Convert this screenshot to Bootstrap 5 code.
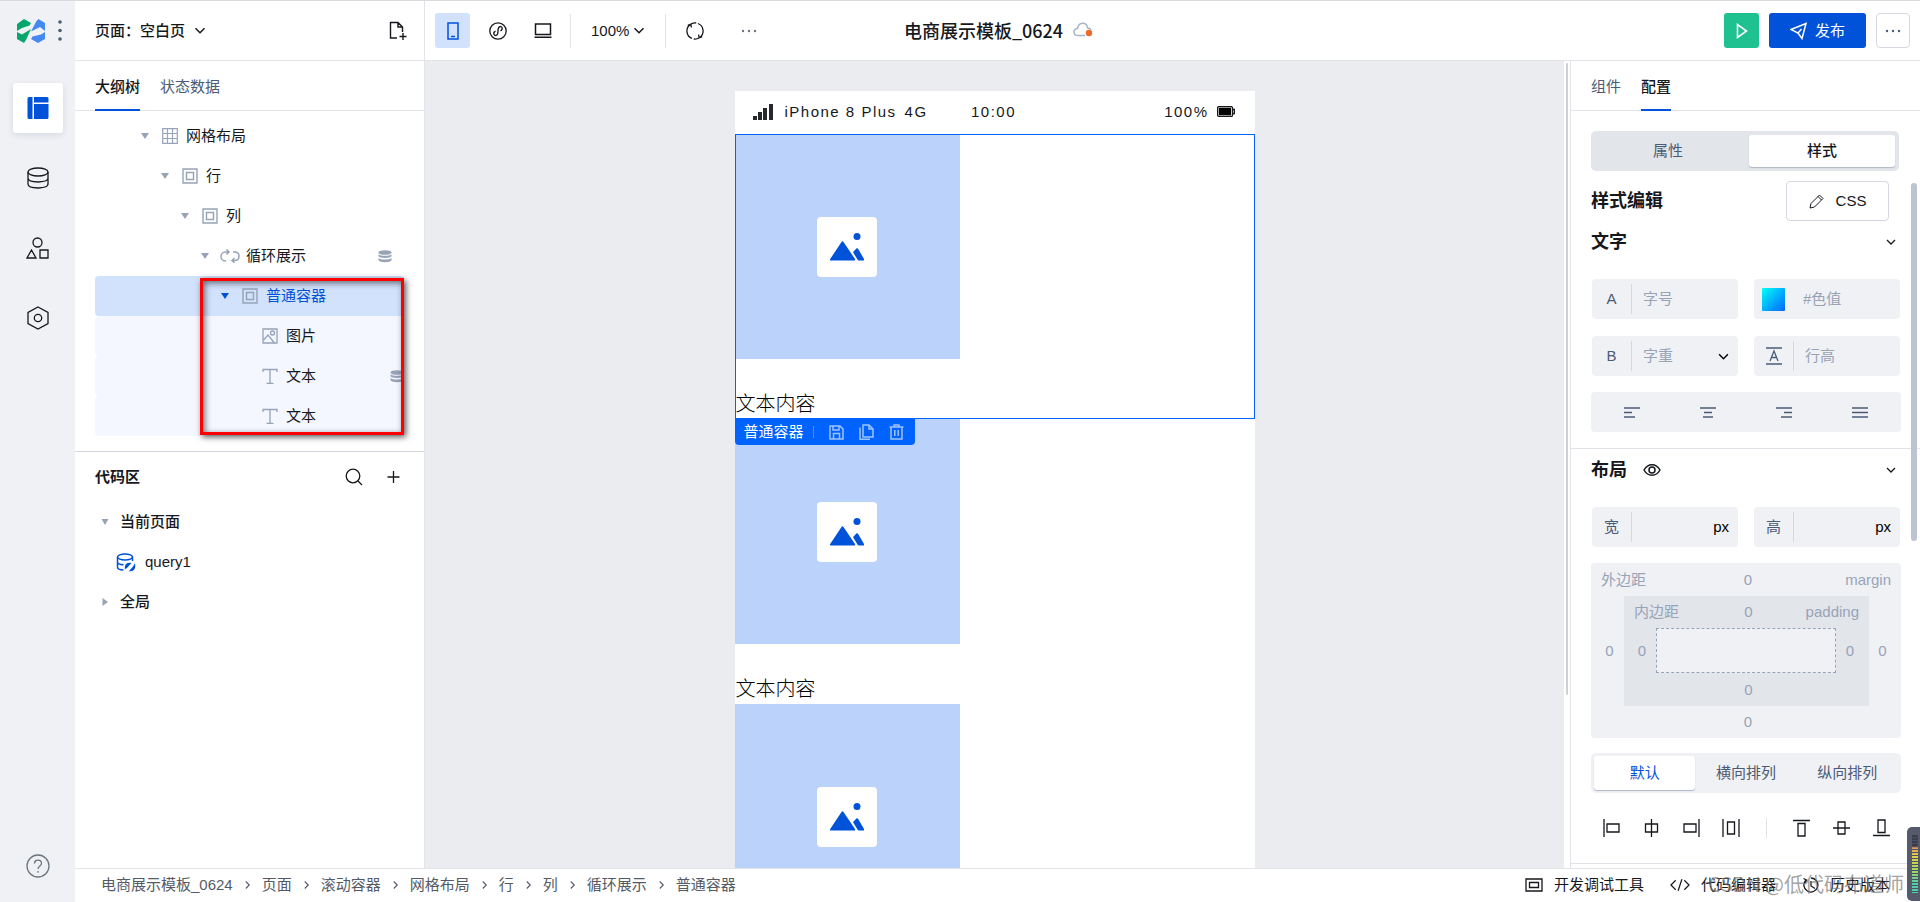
<!DOCTYPE html>
<html lang="zh-CN">
<head>
<meta charset="utf-8">
<meta name="viewport" content="width=device-width, initial-scale=1">
<title>电商展示模板_0624</title>
<link href="https://cdn.jsdelivr.net/npm/bootstrap@5.3.0/dist/css/bootstrap.min.css" rel="stylesheet">
<style>
  :root { --line:#e2e4ea; --ink:#16181d; --slate:#4b5b76; --muted:#97a3b7; --blue:#0052d9; --field:#f0f1f5; --rail:#f0f1f5; }
  body { font-family:"Liberation Sans","Noto Sans CJK SC",sans-serif; font-size:15px; line-height:20px; color:var(--ink); background:#fff; }
  a { color:inherit; text-decoration:none; }
  button { font:inherit; color:inherit; background:none; border:0; padding:0; }
  svg { display:block; flex:none; fill:none; stroke:currentColor; stroke-width:1.3; }
  input { font:inherit; min-width:0; border:0; background:none; padding:0; outline:0; }
  input::placeholder { color:var(--muted); opacity:1; }
  h1,h2 { margin:0; }
  .app { height:100vh; border-top:1px solid #d9dadd; }
  .rail { width:75px; background:var(--rail); flex:none; }
  .rail-head { height:60px; padding:0 13px 0 17px; }
  .rail-btn { width:50px; height:50px; border-radius:3px; }
  .rail-btn.on { background:#fff; color:var(--blue); box-shadow:0 2px 6px rgba(30,50,90,.12); }
  .rail-nav { gap:20px; padding-top:22px; }
  .topbar { height:60px; border-bottom:1px solid var(--line); flex:none; }
  .side { flex:1 0 0; min-width:0; }
  .page-pick { width:350px; border-right:1px solid var(--line); padding:0 17px 0 20px; }
  .semi { font-weight:500; }
  .tools { padding-left:10px; gap:10px; }
  .tools .zoom-pick { margin:0 10px; }
  .tools .sync { margin:0 27px 0 10px; }
  .sq { width:35px; height:35px; border-radius:3px; }
  .sq.on { background:#d2e2fc; color:var(--blue); }
  .vline { width:1px; height:34px; background:var(--line); }
  .proj-wrap { padding:0 0 2px 12px; gap:10px; }
  .proj { font-size:18px; line-height:24px; font-weight:500; font-family:"Noto Sans CJK SC",sans-serif; }
  .acts { gap:10px; padding-right:10px; }
  .run { background:#20c191; color:#fff; }
  .publish { height:35px; width:97px; border-radius:3px; background:var(--blue); color:#fff; }
  .more { width:34px; height:35px; border:1px solid #d5d8e2; border-radius:4px; color:var(--slate); }
  .outline { width:350px; border-right:1px solid var(--line); flex:none; }
  .tabs { height:50px; border-bottom:1px solid var(--line); padding:0 20px; gap:20px; flex:none; }
  .tabs button { color:var(--slate); border-bottom:2px solid transparent; margin-bottom:-1px; padding-top:3px; }
  .tabs button.on { color:var(--ink); border-color:var(--blue); font-weight:500; }
  .tree { padding:5px 20px 15px; border-bottom:1px solid #d5d8e2; }
  .node { height:40px; border-radius:4px; gap:8px; color:var(--muted); }
  .node a { color:var(--ink); }
  .node .tri { margin-right:5px; }
  .node.l1 { padding-left:46px } .node.l2 { padding-left:66px } .node.l3 { padding-left:86px }
  .node.l4 { padding:0 12px 0 106px; gap:6px; }
  .node.l5 { padding-left:126px; background:#d2e2fc } .node.l5 a,.node.l5 .tri { color:var(--blue) }
  .node.l6 { padding-left:167px; background:#f4f7ff }
  .tri { width:8px; height:6px; fill:currentColor; stroke:none; }
  .callout-box { position:absolute; left:105px; top:2px; right:0; bottom:1px; border:3px solid #f00; box-shadow:2px 2px 6px rgba(0,0,0,.65), inset 2px 2px 6px rgba(0,0,0,.55); pointer-events:none; }
  .code-head { padding:15px 24px 15px 20px; }
  .code-head h2 { font-size:15px; line-height:20px; }
  .code-row { height:40px; padding-left:26px; gap:11px; }
  .code-row.leaf { padding-left:41px; gap:9px; }
  .stage { background:#ebecf0; padding-top:30px; overflow:hidden; }
  .phone { width:520px; background:#fff; margin:0 auto; }
  .status { height:43px; padding:0 20px 2px 18px; letter-spacing:.1em; }
  .status > div { flex:1 0 0; }
  .item { position:relative; height:285px; font-size:20px; line-height:30px; font-weight:300; color:#000; }
  .pic { width:225px; height:225px; background:#bbd2fb; margin-bottom:30px; }
  .pic span { width:60px; height:60px; background:#fff; border-radius:4px; }
  .pic svg { stroke:none; fill:var(--blue); }
  .item p { margin:0; padding-left:1px; }
  .item.on { box-shadow:inset 0 0 0 1px #0062ff; z-index:2; }
  .item.on .pic { box-shadow:inset 1px 1px 0 #0062ff; }
  .tag { position:absolute; left:0; top:100%; width:180px; height:26px; padding:0 11px 0 9px; background:#0062ff; border-radius:0 0 4px 4px; color:#fff; font-size:15px; line-height:20px; font-weight:400; gap:15px; }
  .tag button { color:#9ec4ff; }
  .tag .vline { height:12px; background:#4d91ff; margin-left:-6px; }
  .gutter { width:6px; background:#fff; flex:none; padding:2px 2px 0; }
  .gutter div { width:2px; height:632px; background:#cfcfd1; border-radius:1px; max-height:80%; }
  .props { width:350px; border-left:1px solid var(--line); flex:none; overflow:hidden; position:relative; }
  .thumb { position:absolute; right:3px; top:122px; width:6px; height:358px; border-radius:3px; background:#bcc4d2; }
  .pad { padding:0 19px 0 20px; }
  .seg { height:40px; padding:4px; border-radius:5px; background:#e2e5ea; color:var(--slate); }
  .seg.mode { margin:20px 2px 10px 0; gap:8px; }
  .seg button { flex:1 0 0; border-radius:3px; }
  .seg button.on { background:#fff; color:var(--ink); font-weight:500; box-shadow:0 1px 1px #aeb7c5; }
  .seg.flat { background:var(--field); padding:3px; margin:15px 0 20px; }
  .seg.flat button.on { color:var(--blue); font-weight:400; }
  .h-sec { font-size:18px; line-height:24px; font-weight:700; }
  .css-btn { width:103px; height:40px; border:1px solid #d5d8e2; border-radius:4px; margin-right:12px; }
  .sec { height:42px; padding-right:5px; }
  .fields { display:grid; grid-template-columns:146px 146px; justify-content:space-between; gap:17px 0; padding:0 1px; }
  .fld { height:40px; border-radius:4px; background:var(--field); color:var(--slate); padding-right:9px; }
  .fld .key { width:39px; text-align:center; }
  .fld .key svg { margin:0 auto; }
  .fld .vline { height:30px; background:#d5d8e2; margin-right:11px; }
  .fld input, .fld select { flex:1 1 0; }
  .fld select { appearance:none; border:0; background:none; color:var(--muted); font:inherit; min-width:0; outline:0; }
  .swatch { width:23px; height:23px; margin:0 18px 0 8px; border-radius:1px; background:linear-gradient(135deg,#00fff7,#0066ff); }
  .aligns { height:40px; border-radius:4px; background:var(--field); color:var(--slate); padding:0 3px; }
  .aligns button { flex:1 0 0; }
  .aligns svg { margin:auto; }
  .box-m, .box-p { display:grid; color:var(--muted); }
  .box-m { grid-template:33px 110px 32px / 33px 1fr 32px; background:var(--field); border-radius:4px; }
  .box-p { grid-template:32px 45px 33px / 32px 1fr 33px; background:#e2e5ea; }
  .box-top { grid-column:1/4; display:grid; grid-template-columns:1fr 14px 1fr; padding:0 10px; align-items:center; }
  .box-top > :last-child { text-align:right; }
  .num { color:var(--muted); text-align:center; width:100%; padding-left:4px; }
  .num.end { padding:0 5px 0 0; }
  .num.foot { grid-column:1/4; }
  .core { border:1px dashed var(--muted); background:var(--field); }
  .arr { height:30px; margin-bottom:20px; }
  .arr button { width:40px; height:30px; }
  .arr button svg { margin:auto; }
  .arr .vline { height:20px; margin:0 auto; }
  .foot-bar { height:34px; border-top:1px solid var(--line); padding:0 30px 2px 26px; gap:26px; flex:none; position:relative; }
  .crumbs { color:#555b66; gap:11px; }
  .crumbs svg { width:7px; height:10px; }
  .foot-bar button { gap:11px; }
  .watermark { position:absolute; right:16px; top:3px; font:20px/24px "Noto Sans CJK SC",sans-serif; color:rgba(110,110,110,.65); pointer-events:none; }
  .meter { position:absolute; right:0; bottom:1px; width:13px; height:74px; padding:8px 2px 8px 5px; background:#555b6b; border-radius:5px 0 0 5px; }
  .meter div { height:100%; background:repeating-linear-gradient(transparent 0 2px,#4a5060 2px 3px),linear-gradient(#3a3e4a 0 20%,#e59a5a 22%,#e5d04e 36%,#a5d85a 60%,#4fcfa8 85%); }
</style>
</head>
<body>
<svg width="0" height="0" class="position-absolute" aria-hidden="true">
  <symbol id="down" viewBox="0 0 10 8"><path d="M1 2l4 4 4-4" stroke-width="1.3"/></symbol>
  <symbol id="tri" viewBox="0 0 8 6"><path d="M0 0h8L4 6z"/></symbol>
  <symbol id="frame" viewBox="0 0 16 16"><path d="M1 1h14v14H1zM4.500 4.500h7v7h-7z" stroke-width="1.400"/></symbol>
  <symbol id="tee" viewBox="0 0 16 16"><path d="M1 4V1.500h14V4M8 1.500v14M4.500 15.300h7" stroke-width="1.300"/></symbol>
  <symbol id="stack" viewBox="0 0 14 13"><g fill="currentColor" stroke="none"><ellipse cx="7" cy="2.500" rx="6.500" ry="2.300"/><path d="M.5 4.300c2 2 11 2 13 0v2c-1 2.300-12 2.300-13 0zM.5 8c2 2 11 2 13 0v2.200c-1 2.600-12 2.600-13 0z"/></g></symbol>
  <symbol id="scene" viewBox="0 0 34 28"><circle cx="27" cy="3.500" r="3.500"/><path d="M11.500 9q1-1.500 2 0l11.500 17q.5 1.500-1 1.500H1Q-.5 27.500.2 26z"/><path d="M25.500 16.500q1.500-2.500 3 0l5.500 9.500q.5 1.500-1 1.500h-4q-1 0-1.500-1l-4-6.500q-.5-.8 0-1.500z"/></symbol>
  <symbol id="dots" viewBox="0 0 16 4"><g fill="currentColor" stroke="none"><circle cx="2" cy="2" r="1.200"/><circle cx="8" cy="2" r="1.200"/><circle cx="14" cy="2" r="1.200"/></g></symbol>
  <symbol id="next" viewBox="0 0 8 10"><path d="M2 1l4 4-4 4"/></symbol>
</svg>

<div class="app d-flex">
  <aside class="rail d-flex flex-column align-items-center">
    <div class="rail-head w-100 d-flex align-items-center justify-content-between">
      <svg width="28" height="25" viewBox="0 0 28 25"><g stroke="none"><path fill="#07a76c" d="M0 5L7 0l7 4-1.500 2.500L5 9 0 12z"/><path fill="#07a76c" d="M0 13l5 2.500 9-5.500-5 11-2 3-7-4z"/><path fill="#4688f2" d="M28 12l-5-4-9 4.500L19.500 2l2-2L28 4z"/><path fill="#4688f2" d="M28 13v7l-7 4-7-4 1.500-2.500L24 15.500z"/></g></svg>
      <svg width="4" height="22" viewBox="0 0 4 22"><g fill="#4b5b76" stroke="none"><circle cx="2" cy="2" r="1.800"/><circle cx="2" cy="10.500" r="1.800"/><circle cx="2" cy="19" r="1.800"/></g></svg>
    </div>
    <nav class="rail-nav d-flex flex-column">
      <button class="rail-btn on d-flex align-items-center justify-content-center" aria-label="页面编辑"><svg width="22" height="22" viewBox="0 0 22 22"><g fill="currentColor" stroke="none"><path d="M2 0h3.500v22H2q-1.500 0-1.500-1.500v-19Q.5 0 2 0zM7 0h13q1.500 0 1.500 1.500V5.500H7zM7 7h14.500v13.500Q21.500 22 20 22H7z"/></g></svg></button>
      <button class="rail-btn d-flex align-items-center justify-content-center" aria-label="数据源"><svg width="22" height="22" viewBox="0 0 22 22" stroke-width="1.500"><ellipse cx="11" cy="5" rx="10" ry="4"/><path d="M1 5v12c0 5.300 20 5.300 20 0V5M1 11c0 5.300 20 5.300 20 0"/></svg></button>
      <button class="rail-btn d-flex align-items-center justify-content-center" aria-label="组件库"><svg width="23" height="22" viewBox="0 0 23 22" stroke-width="1.500"><circle cx="11.500" cy="5.500" r="4.500"/><path d="M5.500 13L1 21h9zM14 13h8v8h-8z"/></svg></button>
      <button class="rail-btn d-flex align-items-center justify-content-center" aria-label="设置"><svg width="22" height="24" viewBox="0 0 22 24" stroke-width="1.500"><path d="M11 1l10 5.500v11L11 23 1 17.500v-11z"/><circle cx="11" cy="12" r="3.700"/></svg></button>
    </nav>
    <button class="mt-auto mb-4 text-secondary" aria-label="帮助"><svg width="24" height="24" viewBox="0 0 24 24"><circle cx="12" cy="12" r="11"/><path d="M8.500 9.500c0-4.500 7-4.500 7 0 0 2.500-3.500 2.500-3.500 5.500M12 17v1.800"/></svg></button>
  </aside>

  <div class="d-flex flex-column flex-grow-1 overflow-hidden">
    <header class="topbar d-flex align-items-stretch">
      <div class="side d-flex">
        <div class="page-pick d-flex align-items-center flex-shrink-0">
          <button class="semi d-flex align-items-center">页面：空白页<svg class="ms-2" width="14" height="9"><use href="#down"/></svg></button>
          <button class="ms-auto" aria-label="新建页面"><svg width="18" height="20" viewBox="0 0 18 20"><path d="M8 17H1.500V1.500H9L13.500 6v5M9 1.500V6h4.500M14 12v7M10.500 15.500h7" stroke-width="1.400"/></svg></button>
        </div>
        <div class="tools d-flex align-items-center">
          <button class="sq on d-flex align-items-center justify-content-center" aria-label="手机"><svg width="12" height="18" viewBox="0 0 12 18"><path d="M1 1h10v16H1zM4 14.500h4" stroke-width="1.500"/></svg></button>
          <button class="sq d-flex align-items-center justify-content-center" aria-label="小程序"><svg width="18" height="18" viewBox="0 0 18 18"><circle cx="9" cy="9" r="8.200"/><path d="M6.500 9.200c-3 1.500-1.500 4.800.6 4.200C9 12.900 9 11.500 9 9s0-3.900 1.900-4.400c2.100-.6 3.600 2.700.6 4.200"/></svg></button>
          <button class="sq d-flex align-items-center justify-content-center" aria-label="电脑"><svg width="18" height="15" viewBox="0 0 18 15"><path d="M1.500 1h15v10.500h-15zM.5 14.300h17" stroke-width="1.500"/></svg></button>
          <span class="vline"></span>
          <button class="zoom-pick d-flex align-items-center">100%<svg class="ms-1" width="12" height="9"><use href="#down"/></svg></button>
          <span class="vline"></span>
          <button class="sync" aria-label="刷新"><svg width="18" height="18" viewBox="0 0 18 18"><path d="M4.500 2.400A8 8 0 0 0 6 16.500M7.800 17a8 8 0 0 0 5.500-1.200M13.500 15.600A8 8 0 0 0 12 1.500M10.200 1a8 8 0 0 0-5 1M1.800 3.400l3-1.300.6 3.400M16.200 14.600l-3 1.300-.6-3.400"/></svg></button>
          <button class="text-secondary" aria-label="更多"><svg width="16" height="4"><use href="#dots"/></svg></button>
        </div>
      </div>
      <div class="proj-wrap d-flex align-items-center">
        <h1 class="proj">电商展示模板_0624</h1>
        <svg width="20" height="15" viewBox="0 0 20 15"><path d="M12 13.500H5c-5 0-5.500-6.500-.5-7C5.500-.500 14-.5 14.500 6c2 0 3 1 3.500 2" stroke="#a9b4c7" stroke-width="1.500"/><circle cx="16" cy="11" r="3.200" fill="#ed6a2f" stroke="none"/></svg>
      </div>
      <div class="side acts d-flex align-items-center justify-content-end">
        <button class="sq run d-flex align-items-center justify-content-center" aria-label="运行"><svg width="12" height="16" viewBox="0 0 12 16"><path d="M1.500 1.500v13l9-6.500z" stroke-width="1.600"/></svg></button>
        <button class="publish d-flex align-items-center justify-content-center gap-2"><svg width="17" height="18" viewBox="0 0 17 18"><path d="M1 7.500L16 1.500l-4 15-4-5.500zM8 11l3.500-4" stroke-width="1.500"/></svg>发布</button>
        <button class="more d-flex align-items-center justify-content-center" aria-label="更多操作"><svg width="16" height="4"><use href="#dots"/></svg></button>
      </div>
    </header>

    <div class="d-flex flex-grow-1 overflow-hidden">
      <section class="outline">
        <div class="tabs d-flex"><button class="on">大纲树</button><button>状态数据</button></div>
        <div class="tree">
          <div class="node l1 d-flex align-items-center"><svg class="tri"><use href="#tri"/></svg><svg width="16" height="16" viewBox="0 0 16 16"><path d="M.7.7h14.600v14.600H.7zM5.500.7v14.600M10.500.7v14.600M.7 5.500h14.600M.7 10.500h14.600" stroke-width="1.200"/></svg><a href="#">网格布局</a></div>
          <div class="node l2 d-flex align-items-center"><svg class="tri"><use href="#tri"/></svg><svg width="16" height="16"><use href="#frame"/></svg><a href="#">行</a></div>
          <div class="node l3 d-flex align-items-center"><svg class="tri"><use href="#tri"/></svg><svg width="16" height="16"><use href="#frame"/></svg><a href="#">列</a></div>
          <div class="node l4 d-flex align-items-center"><svg class="tri"><use href="#tri"/></svg><svg width="20" height="14" viewBox="0 0 20 14"><path d="M6 12H5.500C-.5 12-.5 3 5.500 3H9M6.500.5L9 3 6.500 5.500M13 3h1.500c6 0 6 8.500 0 8.500H12M14.500 9L12 11.500l2.500 2.300" stroke-width="1.500"/></svg><a href="#">循环展示</a><svg class="ms-auto" width="14" height="13"><use href="#stack"/></svg></div>
          <div class="position-relative">
            <div class="node l5 d-flex align-items-center"><svg class="tri"><use href="#tri"/></svg><svg width="16" height="16"><use href="#frame"/></svg><a href="#">普通容器</a></div>
            <div class="node l6 d-flex align-items-center"><svg width="16" height="16" viewBox="0 0 16 16"><path d="M1 1h14v14H1zM1.500 12l4.500-5 6.500 8"/><circle cx="10.500" cy="5" r="2"/></svg><a href="#">图片</a></div>
            <div class="node l6 d-flex align-items-center"><svg width="16" height="16"><use href="#tee"/></svg><a href="#">文本</a><svg class="ms-auto" width="14" height="13"><use href="#stack"/></svg></div>
            <div class="node l6 d-flex align-items-center"><svg width="16" height="16"><use href="#tee"/></svg><a href="#">文本</a></div>
            <div class="callout-box"></div>
          </div>
        </div>
        <div class="code-head d-flex align-items-center">
          <h2 class="fw-bold me-auto">代码区</h2>
          <button aria-label="搜索"><svg width="18" height="18" viewBox="0 0 18 18"><circle cx="8" cy="8" r="6.800"/><path d="M13 13l4 4"/></svg></button>
          <button class="ms-4" aria-label="新增"><svg width="13" height="12" viewBox="0 0 13 12"><path d="M6.500 0v12M.5 6h12"/></svg></button>
        </div>
        <div class="code-row semi d-flex align-items-center"><svg width="8" height="8" viewBox="0 0 8 8"><path d="M.5 1h7L4 7z" fill="#97a3b7" stroke="none"/></svg>当前页面</div>
        <div class="code-row leaf d-flex align-items-center"><svg width="20" height="19" viewBox="0 0 20 19"><g stroke="#0052d9" stroke-width="1.500"><ellipse cx="9" cy="4" rx="7.500" ry="3"/><path d="M1.500 4v10c0 2 3 3 6 3M1.500 9c0 2 3 2.700 6 2.700M16.500 4v4"/><path d="M9.500 15a4 4 0 0 1 4.500-4.500l-3.500 4zM18.500 12.500a4 4 0 0 1-4 5l3.500-4z" fill="#0052d9"/></g></svg><a href="#">query1</a></div>
        <div class="code-row semi d-flex align-items-center"><svg width="8" height="8" viewBox="0 0 8 8"><path d="M1.500 0v8L7 4z" fill="#97a3b7" stroke="none"/></svg>全局</div>
      </section>

      <main class="stage flex-grow-1">
        <div class="phone">
          <div class="status d-flex align-items-center">
            <div class="d-flex align-items-center"><svg width="20" height="16" viewBox="0 0 20 16"><g fill="#26282c" stroke="none"><path d="M0 12h4v4H0zM5 8h4v8H5zM10 4h4v12h-4zM16 0h4v16h-4z"/></g></svg><span class="ms-2 ps-1">iPhone 8 Plus</span><span class="ms-2">4G</span></div>
            <span>10:00</span>
            <div class="d-flex align-items-center justify-content-end"><span>100%</span><svg class="ms-2" width="18" height="11" viewBox="0 0 18 11"><rect x=".6" y=".6" width="15" height="9.800" rx="1.500"/><path d="M2.500 2.500h11v6h-11z" fill="#000" stroke="#000"/><path d="M16 3.500h1.500v4H16"/></svg></div>
          </div>
          <div class="item on">
            <div class="pic d-flex align-items-center justify-content-center"><span class="d-flex align-items-center justify-content-center"><svg width="34" height="28"><use href="#scene"/></svg></span></div>
            <p>文本内容</p>
            <div class="tag d-flex align-items-center">
              <span class="flex-shrink-0">普通容器</span><span class="vline"></span>
              <button aria-label="保存"><svg width="15" height="15" viewBox="0 0 15 15"><path d="M1 1h10l3 3v10H1zM4 1.500V5h6V1.500M4.500 14V8.500h6V14" stroke-width="1.500"/></svg></button>
              <button aria-label="复制"><svg width="15" height="16" viewBox="0 0 15 16"><path d="M4 1h6l4 4v8H4zM10 1v4h4M1 3.500V15.200h10" stroke-width="1.500"/></svg></button>
              <button aria-label="删除"><svg width="15" height="16" viewBox="0 0 15 16"><path d="M.5 3h14M5 3V1h5v2M2 3v12h11V3M5.800 6v6M9.200 6v6" stroke-width="1.500"/></svg></button>
            </div>
          </div>
          <div class="item">
            <div class="pic d-flex align-items-center justify-content-center"><span class="d-flex align-items-center justify-content-center"><svg width="34" height="28"><use href="#scene"/></svg></span></div>
            <p>文本内容</p>
          </div>
          <div class="item">
            <div class="pic d-flex align-items-center justify-content-center"><span class="d-flex align-items-center justify-content-center"><svg width="34" height="28"><use href="#scene"/></svg></span></div>
          </div>
        </div>
      </main>
      <div class="gutter"><div></div></div>

      <aside class="props">
        <div class="tabs d-flex"><button>组件</button><button class="on">配置</button></div>
        <div class="pad">
          <div class="seg mode d-flex" role="group"><button>属性</button><button class="on">样式</button></div>
          <div class="d-flex align-items-center justify-content-between">
            <h2 class="h-sec">样式编辑</h2>
            <button class="css-btn d-flex align-items-center justify-content-center gap-2"><svg width="15" height="15" viewBox="0 0 15 15"><path d="M1 14l1-4.500L10.500 1 14 4.500 5.500 13zM9 2.500L12.500 6" stroke-width="1"/></svg><span class="ps-1">CSS</span></button>
          </div>
          <div class="sec d-flex align-items-center justify-content-between"><h2 class="h-sec">文字</h2><svg width="10" height="8"><use href="#down"/></svg></div>
          <div class="fields mt-3">
            <label class="fld d-flex align-items-center"><span class="key">A</span><span class="vline"></span><input placeholder="字号"></label>
            <label class="fld d-flex align-items-center"><span class="swatch"></span><input placeholder="#色值"></label>
            <label class="fld d-flex align-items-center"><span class="key">B</span><span class="vline"></span><select><option>字重</option></select><svg class="text-black" width="11" height="9"><use href="#down"/></svg></label>
            <label class="fld d-flex align-items-center"><span class="key"><svg width="16" height="18" viewBox="0 0 16 18"><path d="M0 1h16M0 17h16M4 14L8 4l4 10M5.500 10.500h5"/></svg></span><span class="vline"></span><input placeholder="行高"></label>
          </div>
          <div class="aligns d-flex align-items-center mt-3">
            <button aria-label="左对齐"><svg width="16" height="11" viewBox="0 0 16 11"><path d="M0 1h16M0 5.500h8M0 10h11"/></svg></button>
            <button aria-label="居中"><svg width="16" height="11" viewBox="0 0 16 11"><path d="M0 1h16M4 5.500h8M3 10h10"/></svg></button>
            <button aria-label="右对齐"><svg width="16" height="11" viewBox="0 0 16 11"><path d="M0 1h16M8 5.500h8M5 10h11"/></svg></button>
            <button aria-label="两端对齐"><svg width="16" height="11" viewBox="0 0 16 11"><path d="M0 1h16M0 5.500h16M0 10h16"/></svg></button>
          </div>
        </div>
        <div class="pad mt-3 border-top">
          <div class="sec d-flex align-items-center"><h2 class="h-sec">布局</h2><svg class="ms-3" width="18" height="12" viewBox="0 0 18 12"><path d="M1 6c4-7 12-7 16 0-4 7-12 7-16 0z" stroke-width="1.500"/><circle cx="9" cy="6" r="3" stroke-width="1.500"/></svg><svg class="ms-auto" width="10" height="8"><use href="#down"/></svg></div>
          <div class="fields mt-3">
            <label class="fld d-flex align-items-center"><span class="key">宽</span><span class="vline"></span><input><span class="text-black">px</span></label>
            <label class="fld d-flex align-items-center"><span class="key">高</span><span class="vline"></span><input><span class="text-black">px</span></label>
          </div>
          <div class="box-m mt-3">
            <div class="box-top"><span>外边距</span><input class="num" value="0" aria-label="上外边距"><span>margin</span></div>
            <input class="num" value="0" aria-label="左外边距">
            <div class="box-p">
              <div class="box-top"><span>内边距</span><input class="num" value="0" aria-label="上内边距"><span>padding</span></div>
              <input class="num" value="0" aria-label="左内边距"><div class="core"></div><input class="num end" value="0" aria-label="右内边距">
              <input class="num foot" value="0" aria-label="下内边距">
            </div>
            <input class="num end" value="0" aria-label="右外边距">
            <input class="num foot" value="0" aria-label="下外边距">
          </div>
          <div class="seg flat d-flex"><button class="on">默认</button><button>横向排列</button><button>纵向排列</button></div>
          <div class="arr d-flex align-items-center">
            <button aria-label="左对齐"><svg width="17" height="18" viewBox="0 0 17 18"><path d="M1 0v18M4 5h12v8H4z"/></svg></button>
            <button aria-label="水平居中"><svg width="17" height="18" viewBox="0 0 17 18"><path d="M8.500 0v18M2.500 5h12v8h-12z"/></svg></button>
            <button aria-label="右对齐"><svg width="17" height="18" viewBox="0 0 17 18"><path d="M16 0v18M1 5h12v8H1z"/></svg></button>
            <button aria-label="水平分布"><svg width="18" height="18" viewBox="0 0 18 18"><path d="M1 0v18M17 0v18M5.500 3h7v12h-7z"/></svg></button>
            <span class="vline"></span>
            <button aria-label="顶对齐"><svg width="17" height="18" viewBox="0 0 17 18"><path d="M0 1.500h17M5 4.500h7V17H5z"/></svg></button>
            <button aria-label="垂直居中"><svg width="17" height="18" viewBox="0 0 17 18"><path d="M0 9h17M5 3h7v12H5z"/></svg></button>
            <button aria-label="底对齐"><svg width="17" height="18" viewBox="0 0 17 18"><path d="M0 16.500h17M5 1h7v12.500H5z"/></svg></button>
          </div>
        </div>
        <div class="border-top"></div>
        <div class="thumb"></div>
      </aside>
    </div>

    <footer class="foot-bar d-flex align-items-center">
      <nav class="crumbs d-flex align-items-center me-auto">
        <a href="#">电商展示模板_0624</a><svg><use href="#next"/></svg><a href="#">页面</a><svg><use href="#next"/></svg><a href="#">滚动容器</a><svg><use href="#next"/></svg><a href="#">网格布局</a><svg><use href="#next"/></svg><a href="#">行</a><svg><use href="#next"/></svg><a href="#">列</a><svg><use href="#next"/></svg><a href="#">循环展示</a><svg><use href="#next"/></svg><a href="#">普通容器</a>
      </nav>
      <button class="d-flex align-items-center"><svg width="18" height="14" viewBox="0 0 18 14"><path d="M1 1h16v12H1zM4.500 4.500h9v5h-9z"/></svg>开发调试工具</button>
      <button class="d-flex align-items-center"><svg width="20" height="12" viewBox="0 0 21 12"><path d="M6 1L1 6l5 5M15 1l5 5-5 5M12.500 0l-4 12"/></svg>代码编辑器</button>
      <button class="d-flex align-items-center"><svg width="17" height="16" viewBox="0 0 17 16"><path d="M4 3a7 7 0 1 0 5-2M1.500 1.500L4.500 3 3 6M9 4v5l4 2.500"/></svg>历史版本</button>
      <div class="watermark">CSDN @低代码布道师</div>
      <div class="meter"><div></div></div>
    </footer>
  </div>
</div>
<script src="https://cdn.jsdelivr.net/npm/bootstrap@5.3.0/dist/js/bootstrap.bundle.min.js"></script>
</body>
</html>
